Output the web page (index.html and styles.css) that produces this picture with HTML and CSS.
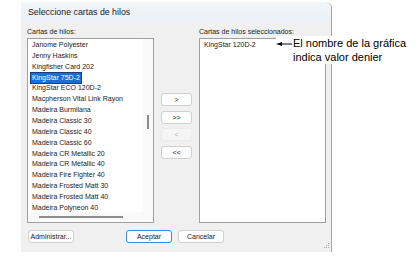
FILE: index.html
```html
<!DOCTYPE html>
<html lang="es">
<head>
    <meta charset="UTF-8">
    <title>Seleccione cartas de hilos</title>
    <link rel="stylesheet" href="styles.css">
</head>
<body>
    <div class="dialog">
        <div class="titlebar">Seleccione cartas de hilos</div>

        <div class="dialog-body">
            <div class="panes">
                <div class="pane">
                    <div class="pane-label">Cartas de hilos:</div>
                    <div class="listbox scrolling">
                        <ul class="items">
                            <li><span>Janome Polyester</span></li>
                            <li><span>Jenny Haskins</span></li>
                            <li><span>Kingfisher Card 202</span></li>
                            <li class="selected"><span>KingStar 75D-2</span></li>
                            <li><span>KingStar ECO 120D-2</span></li>
                            <li><span>Macpherson Vital Link Rayon</span></li>
                            <li><span>Madeira Burmilana</span></li>
                            <li><span>Madeira Classic 30</span></li>
                            <li><span>Madeira Classic 40</span></li>
                            <li><span>Madeira Classic 60</span></li>
                            <li><span>Madeira CR Metallic 20</span></li>
                            <li><span>Madeira CR Metallic 40</span></li>
                            <li><span>Madeira Fire Fighter 40</span></li>
                            <li><span>Madeira Frosted Matt 30</span></li>
                            <li><span>Madeira Frosted Matt 40</span></li>
                            <li><span>Madeira Polyneon 40</span></li>
                        </ul>
                        <div class="vscroll"><div class="vthumb"></div></div>
                        <div class="hscroll"><div class="hthumb"></div></div>
                        <div class="corner"></div>
                    </div>
                </div>

                <div class="movers">
                    <button class="btn">&gt;</button>
                    <button class="btn">&gt;&gt;</button>
                    <button class="btn" disabled>&lt;</button>
                    <button class="btn">&lt;&lt;</button>
                </div>

                <div class="pane">
                    <div class="pane-label">Cartas de hilos seleccionados:</div>
                    <div class="listbox">
                        <ul class="items">
                            <li><span>KingStar 120D-2</span></li>
                        </ul>
                    </div>
                </div>
            </div>

            <div class="actions">
                <button class="btn wide">Administrar...</button>
                <button class="btn wide default push">Aceptar</button>
                <button class="btn wide">Cancelar</button>
                <svg class="grip" width="7" height="7" viewBox="0 0 7 7">
                    <rect x="5" y="1" width="1" height="1" fill="#a8a8a8"/>
                    <rect x="3" y="3" width="1" height="1" fill="#a8a8a8"/>
                    <rect x="5" y="3" width="1" height="1" fill="#a8a8a8"/>
                    <rect x="1" y="5" width="1" height="1" fill="#a8a8a8"/>
                    <rect x="3" y="5" width="1" height="1" fill="#a8a8a8"/>
                    <rect x="5" y="5" width="1" height="1" fill="#a8a8a8"/>
                </svg>
            </div>
        </div>
    </div>

    <!-- callout that sits over the dialog -->
    <div class="callout">
        <svg class="arrow" width="17" height="6" viewBox="0 0 17 6">
            <line x1="4" y1="3" x2="16" y2="3" stroke="#000" stroke-width="1"/>
            <polygon points="0,3 6,1 6,5" fill="#000"/>
        </svg>
        <div class="callout-text">El nombre de la gráfica<br>indica valor denier</div>
    </div>
</body>
</html>
```

FILE: styles.css
```css
* {
    box-sizing: border-box;
}

body {
    margin: 0;
    padding: 2px 0 0 21px;
    background-color: #ffffff;
    font-family: 'Liberation Sans', Arial, sans-serif;
    color: #000;
}

.dialog {
    width: 311px;
    height: 250px;
    background-color: #f0f0f0;
    border-right: 1px solid #a6a6a6;
    border-top-right-radius: 6px;
    display: flex;
    flex-direction: column;
}

.titlebar {
    height: 20px;
    line-height: 21px;
    padding-left: 7px;
    font-size: 8.8px;
    color: #1a1a1a;
    background: linear-gradient(#f3f6fa, #eaf0f6);
    border-top-right-radius: 6px;
}

.dialog-body {
    flex: 1;
    display: flex;
    flex-direction: column;
    padding: 4px 4px 0 6px;
}

.panes {
    display: flex;
}

.pane {
    display: flex;
    flex-direction: column;
}

.pane-label {
    height: 12px;
    line-height: 11px;
    font-size: 7px;
    color: #222;
}

.listbox {
    width: 127px;
    height: 185px;
    border: 1px solid #a0a0a0;
    background-color: #fff;
}

.listbox.scrolling {
    display: grid;
    grid-template-columns: 1fr 10px;
    grid-template-rows: 1fr 10px;
}

.items {
    list-style: none;
    margin: 0;
    padding: 1px 0 0 3px;
    font-size: 7px;
    color: #1a1a1a;
    overflow: hidden;
}

.items li {
    height: 10.87px;
    line-height: 10.87px;
    white-space: nowrap;
}

.items li span {
    padding: 0 1px;
    display: inline-block;
}

.items li.selected span {
    background-color: #1a6fd6;
    color: #fff;
    outline: 1px solid #1b3f75;
}

.vscroll {
    background-color: #fafafa;
    display: flex;
    justify-content: center;
    padding-top: 76px;
}

.vthumb {
    width: 2px;
    height: 14px;
    background-color: #8c8c8c;
}

.hscroll {
    background-color: #fafafa;
    padding: 4px 0 0 11px;
}

.hthumb {
    width: 84px;
    height: 2px;
    background-color: #8c8c8c;
}

.corner {
    background-color: #fafafa;
}

.movers {
    width: 45px;
    padding-top: 67px;
    display: flex;
    flex-direction: column;
    align-items: center;
    gap: 4.5px;
}

.btn {
    width: 31px;
    height: 13px;
    padding: 0;
    font-family: 'Liberation Sans', Arial, sans-serif;
    font-size: 7px;
    color: #222;
    background-color: #fdfdfd;
    border: 1px solid #d0d0d0;
    border-radius: 3px;
}

.btn:disabled {
    color: #b5b5b5;
    background-color: #f5f5f5;
    border-color: #ececec;
}

.actions {
    display: flex;
    align-items: flex-start;
    margin-top: 7px;
    padding-left: 1px;
    gap: 6px;
}

.btn.wide {
    width: 46px;
}

.btn.default {
    border-color: #3d8ad6;
}

.push {
    margin-left: 46px;
}

.grip {
    margin-left: auto;
    margin-top: 12px;
    margin-right: -3px;
}

.callout {
    position: absolute;
    left: 276px;
    top: 36px;
    display: flex;
    align-items: flex-start;
    background-color: #fff;
}

.arrow {
    margin-top: 5px;
}

.callout-text {
    font-size: 11px;
    line-height: 14px;
    color: #000;
    padding-right: 4px;
}
```
